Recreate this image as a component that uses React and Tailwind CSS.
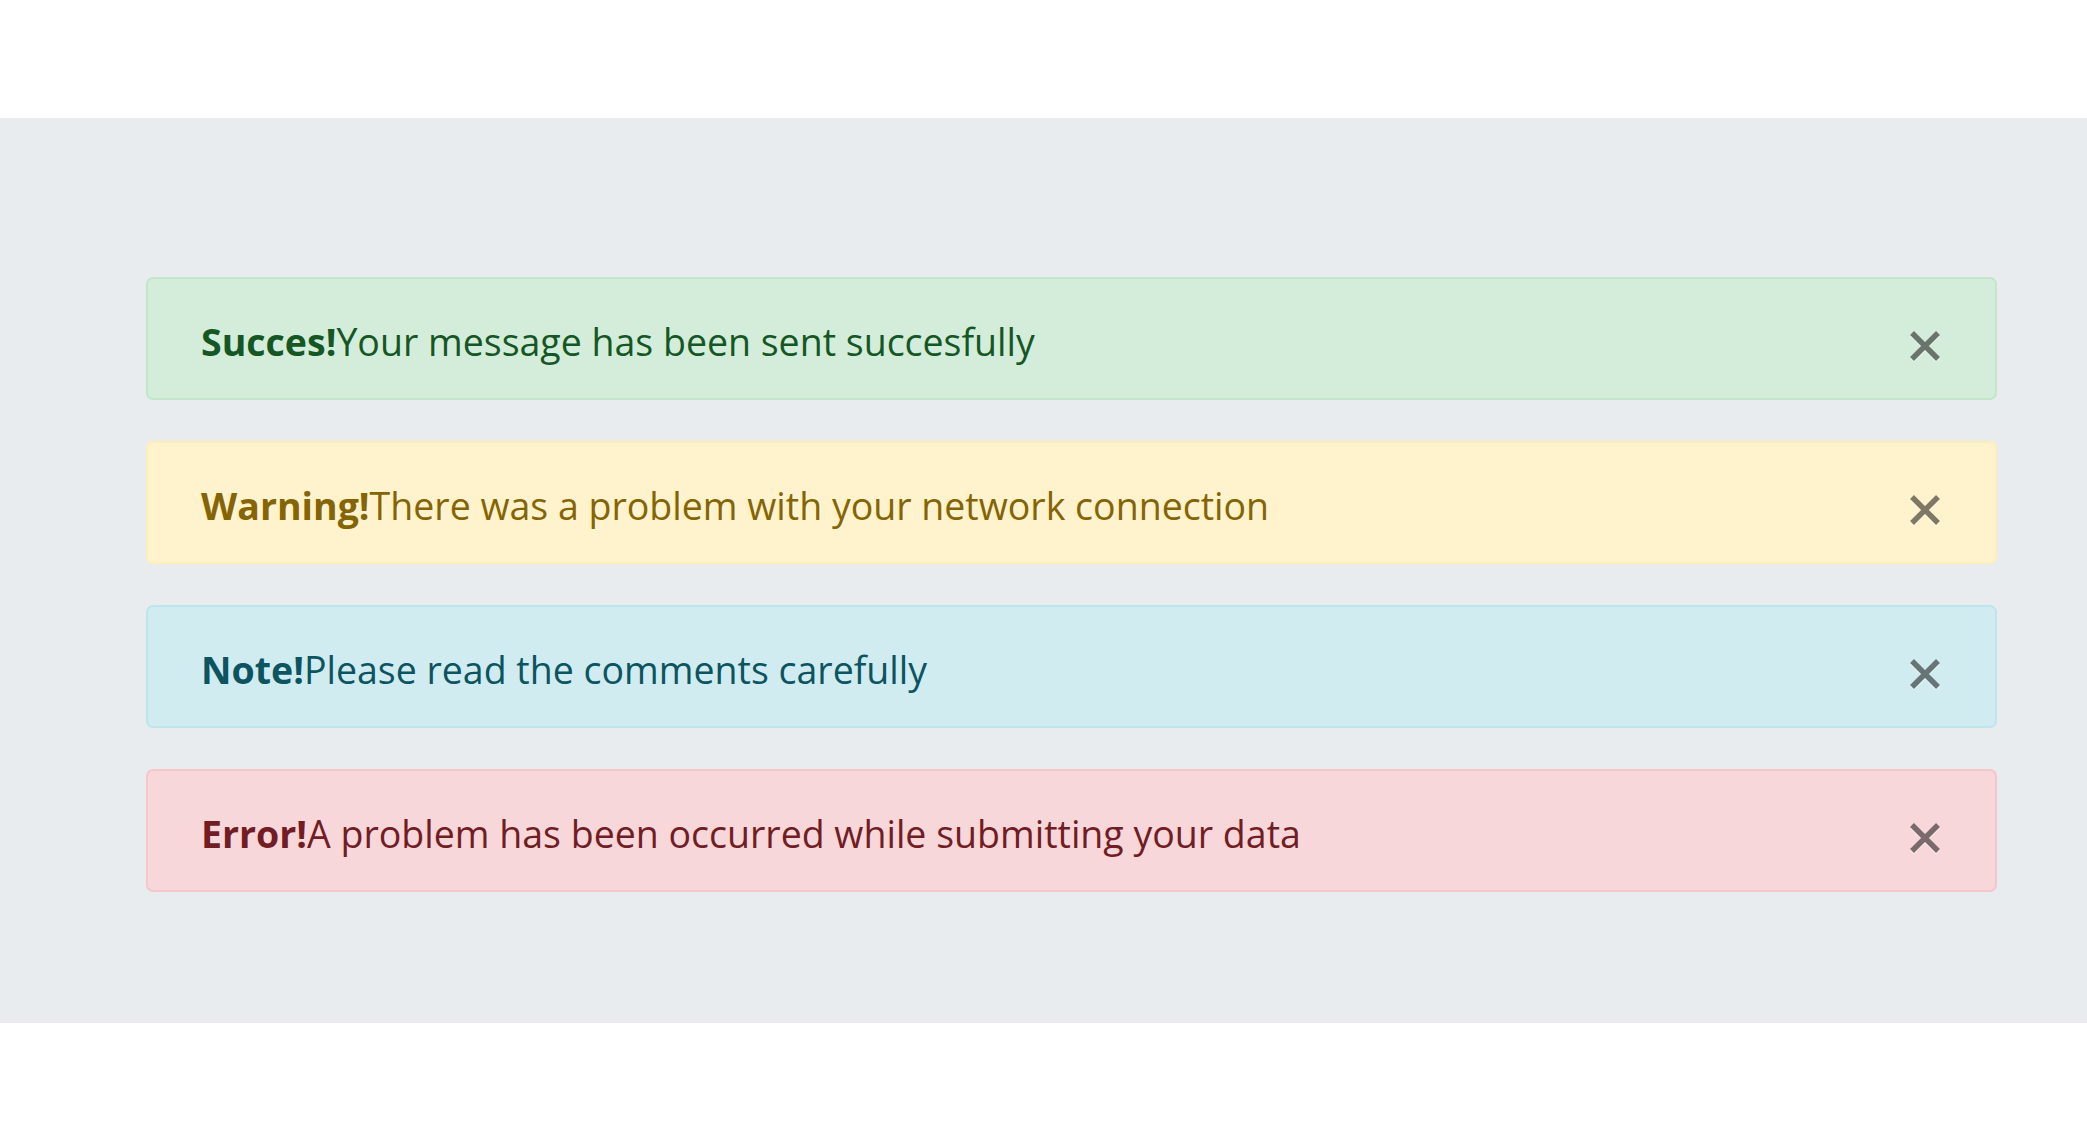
const alerts = [
  {
    title: "Succes!",
    text: "Your message has been sent succesfully",
    box: "bg-[#d4edda] border-[#c3e6cb] text-[#155724]",
  },
  {
    title: "Warning!",
    text: "There was a problem with your network connection",
    box: "bg-[#fff3cd] border-[#ffeeba] text-[#856404]",
  },
  {
    title: "Note!",
    text: "Please read the comments carefully",
    box: "bg-[#d1ecf1] border-[#bee5eb] text-[#0c5460]",
  },
  {
    title: "Error!",
    text: "A problem has been occurred while submitting your data",
    box: "bg-[#f8d7da] border-[#f5c6cb] text-[#721c24]",
  },
];

function CloseIcon() {
  return (
    <svg width="32" height="34" viewBox="0 0 32 34" aria-hidden="true">
      <g opacity="0.5" strokeWidth="5.5" strokeLinecap="butt">
        <g transform="translate(0 1.5)" stroke="#fff">
          <path d="M3 5 L29 31 M29 5 L3 31" />
        </g>
        <path d="M3 5 L29 31 M29 5 L3 31" stroke="#000" />
      </g>
    </svg>
  );
}

export default function App() {
  return (
    <div className="min-h-screen bg-white" style={{ fontFamily: '"Open Sans", "Noto Sans", sans-serif' }}>
      <div className="h-[118px]" />
      <section className="bg-[#e9ecef] pt-[159px] pb-[131px]">
        <div className="ml-[146px] w-[1851px] flex flex-col gap-[41px]">
          {alerts.map((a) => (
            <div
              key={a.title}
              className={`h-[123px] flex items-center justify-between rounded-[7px] border-2 pl-[53px] pr-[54px] ${a.box}`}
            >
              <p className="text-[37.5px] leading-none pt-[6px]">
                <strong className="font-bold">{a.title}</strong>
                {a.text}
              </p>
              <button type="button" aria-label="Close" className="mt-[13px] flex">
                <CloseIcon />
              </button>
            </div>
          ))}
        </div>
      </section>
    </div>
  );
}
